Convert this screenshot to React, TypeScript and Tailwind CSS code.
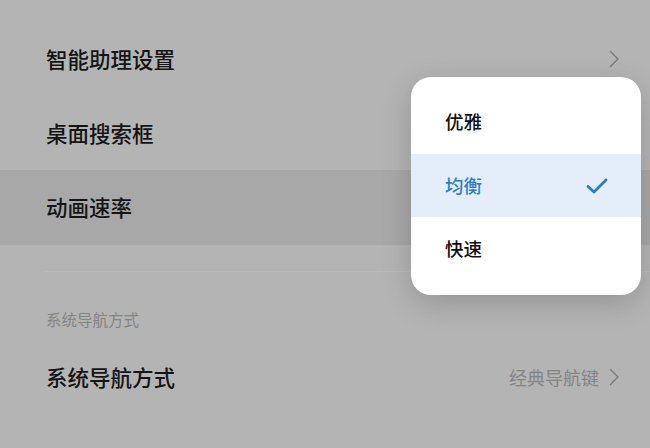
import React from "react";

const Chevron = () => (
  <svg width="11" height="18" viewBox="0 0 11 18" fill="none">
    <path d="M1.5 1.5 L9 9 L1.5 16.5" stroke="#7a7a7a" strokeWidth="1.4" strokeLinecap="round" strokeLinejoin="round" />
  </svg>
);

const Check = () => (
  <svg width="22" height="16" viewBox="0 0 22 16" fill="none">
    <path d="M2 8.5 L8 14 L20 2" stroke="#2b7bd1" strokeWidth="2.8" strokeLinecap="round" strokeLinejoin="round" />
  </svg>
);

export default function App() {
  const font = { fontFamily: '"Noto Sans CJK SC", "Noto Sans", sans-serif' };
  return (
    <div className="relative w-[650px] h-[448px] overflow-hidden bg-[#b4b4b4]" style={font}>
      <div className="flex flex-col pt-[22px]">
        <div className="h-[74px] flex items-center justify-between pl-[46px] pr-[30px]">
          <span className="text-[21.5px] font-medium text-[#151515]">智能助理设置</span>
          <Chevron />
        </div>
        <div className="h-[74px] flex items-center pl-[46px]">
          <span className="text-[21.5px] font-medium text-[#151515]">桌面搜索框</span>
        </div>
        <div className="h-[75px] flex items-center pl-[46px] bg-[#a8a8a8]">
          <span className="text-[21.5px] font-medium text-[#151515]">动画速率</span>
        </div>
        <div className="mt-[26px] ml-[45px] h-px bg-[#bababa]" />
        <div className="mt-[37px] pl-[46px] h-[22px] flex items-center">
          <span className="text-[15.5px] text-[#858585]">系统导航方式</span>
        </div>
        <div className="mt-[9px] h-[74px] flex items-center justify-between pl-[46px] pr-[30px]">
          <span className="text-[21.5px] font-medium text-[#151515]">系统导航方式</span>
          <div className="flex items-center gap-[10px]">
            <span className="text-[18px] text-[#858585]">经典导航键</span>
            <Chevron />
          </div>
        </div>
      </div>

      <div className="absolute left-[411px] top-[77px] w-[230px] h-[218px] bg-white rounded-[20px] py-[13px] flex flex-col shadow-[0_8px_30px_rgba(0,0,0,0.18)] overflow-hidden">
        <div className="h-[64px] flex items-center pl-[34px]">
          <span className="text-[18.5px] font-medium text-[#111]">优雅</span>
        </div>
        <div className="h-[63px] flex items-center justify-between pl-[34px] pr-[33px] bg-[#e3eefa]">
          <span className="text-[18.5px] font-medium text-[#2b7bd1]">均衡</span>
          <Check />
        </div>
        <div className="h-[64px] flex items-center pl-[34px]">
          <span className="text-[18.5px] font-medium text-[#111]">快速</span>
        </div>
      </div>
    </div>
  );
}
